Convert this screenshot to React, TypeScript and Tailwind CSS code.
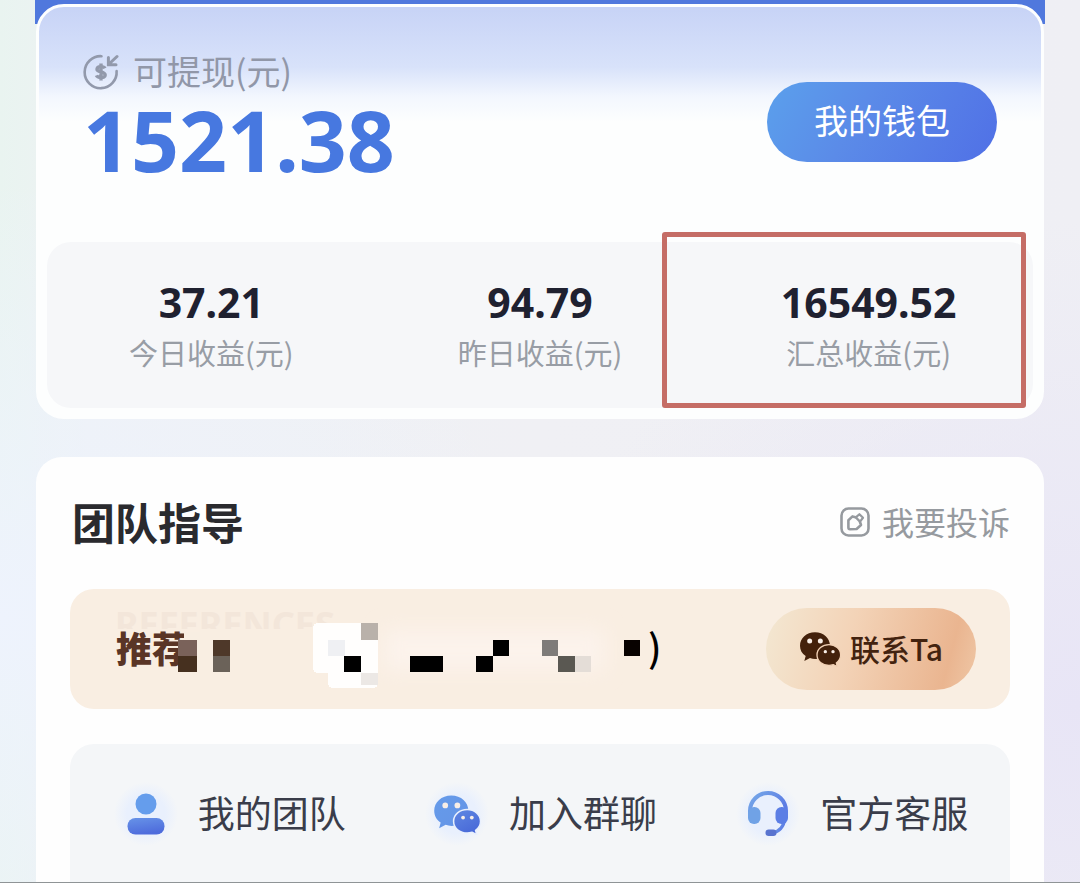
import React from "react";

const stats = [
  { value: "37.21", label: "今日收益(元)" },
  { value: "94.79", label: "昨日收益(元)" },
  { value: "16549.52", label: "汇总收益(元)", highlighted: true },
];

function WithdrawIcon() {
  return (
    <svg viewBox="0 0 36 36" className="size-9 shrink-0" fill="none" stroke="#9299ab" strokeWidth="2.6" aria-hidden="true">
      <path d="M18.5 2.2A16 16 0 1 0 33.6 17" strokeLinecap="round" />
      <path d="M34 2.5 25.5 10.5M25.4 3.4V10.8H33" strokeWidth="3" strokeLinecap="round" />
      <path d="M22 14.2C21 12.2 14.2 11.6 14 15.2C13.9 18.6 22.2 17 22.2 20.9C22.2 24.8 14.4 23.8 13.4 21.4M18 9.4V26.4" strokeWidth="3.4" />
    </svg>
  );
}

function ComplaintIcon() {
  return (
    <svg viewBox="0 0 30 30" className="size-[30px] shrink-0" fill="none" stroke="#969a9f" strokeWidth="2.6" aria-hidden="true">
      <rect x="1.5" y="1.5" width="27" height="27" rx="7" />
      <path d="M15.4 10.2L12.5 9.4L8.4 13.2V20.6Q8.4 22.2 10 22.2L16.6 22L21 18L20 15" strokeLinejoin="round" strokeLinecap="round" />
      <path d="M15.8 10.4L19.4 7.2L23 10.8L20 14.6Z" strokeWidth="2.2" strokeLinejoin="round" />
    </svg>
  );
}

function WechatIcon({ className, big, small, gap }: { className: string; big: string; small: string; gap: string }) {
  return (
    <svg viewBox="0 0 126 108" className={className} aria-hidden="true">
      <defs>
        <linearGradient id="bubble" x1="0" y1="0" x2="1" y2="1">
          <stop offset="0" stopColor="#659bea" />
          <stop offset="1" stopColor="#6594e6" />
        </linearGradient>
        <linearGradient id="bubbleSmall" x1="0" y1="0" x2="0.6" y2="1">
          <stop offset="0" stopColor="#6088e2" />
          <stop offset="1" stopColor="#4869d8" />
        </linearGradient>
      </defs>
      <path fill={big} d="M48 4C22 4 3 22 3 44C3 57 9 68 20 75L16 90L33 81C38 83 43 84 49 84C74 84 93 66 93 44C93 22 74 4 48 4Z" />
      <circle cx="32" cy="30" r="7.5" fill="#f8eee6" />
      <circle cx="64" cy="30" r="7.5" fill="#f8eee6" />
      <path fill={small} stroke={gap} strokeWidth="4" d="M90 41C70 41 54 54 54 72C54 90 70 103 90 103C95 103 99 102 103 101L115 107L112 96C120 90 125 82 125 72C125 54 109 41 90 41Z" />
      <circle cx="79" cy="62" r="5" fill="#f8eee6" />
      <circle cx="102" cy="62" r="5" fill="#f8eee6" />
    </svg>
  );
}

function MemberIcon() {
  return (
    <svg viewBox="0 0 38 42" className="h-[42px] w-[38px]" aria-hidden="true">
      <defs>
        <linearGradient id="member" x1="0" y1="0" x2="0.3" y2="1">
          <stop offset="0" stopColor="#6793e8" />
          <stop offset="1" stopColor="#4e6cdc" />
        </linearGradient>
      </defs>
      <circle cx="19" cy="11" r="10.5" fill="#659dec" />
      <rect x="0.5" y="25" width="37" height="16.5" rx="8" fill="url(#member)" />
    </svg>
  );
}

function HeadsetIcon() {
  return (
    <svg viewBox="0 0 42 46" className="h-[46px] w-[42px]" fill="none" aria-hidden="true">
      <defs>
        <linearGradient id="headset" x1="0" y1="0" x2="1" y2="0.5">
          <stop offset="0" stopColor="#76a9e8" />
          <stop offset="1" stopColor="#5c7ce4" />
        </linearGradient>
      </defs>
      <g stroke="url(#headset)" strokeLinecap="round">
        <path d="M3 24V20A18 18 0 0 1 39 20V24" strokeWidth="4" />
        <path d="M38 27C37 36 32 41 24 42.5" strokeWidth="3" />
      </g>
      <rect x="1" y="16" width="12.5" height="17" rx="6" fill="#70a2e6" />
      <rect x="28.5" y="16" width="12.5" height="17" rx="6" fill="#5b7ee5" />
      <rect x="18.5" y="38.5" width="11" height="6.5" rx="3.2" fill="#5873cf" />
    </svg>
  );
}

function Mosaic() {
  return (
    <svg viewBox="178 608 462 82" className="-ml-[10px] h-[82px] w-[462px] shrink-0" shapeRendering="crispEdges" aria-hidden="true">
      <defs>
        <filter id="haze" x="-20%" y="-60%" width="140%" height="220%">
          <feGaussianBlur stdDeviation="10" />
        </filter>
      </defs>
      <rect x="384" y="630" width="220" height="40" fill="#fcf3ec" filter="url(#haze)" />
      <path d="M184 632H200V640H184Z" fill="#f8eee2" />
      <path d="M178 640H197V656H178Z" fill="#7a625a" />
      <path d="M178 656H197V672H178Z" fill="#46301f" />
      <path d="M213 640H230V656H213Z" fill="#4e3829" />
      <path d="M213 656H230V672H213Z" fill="#6b6259" />
      <rect x="313" y="623" width="65" height="50" rx="5" fill="#fffefd" />
      <rect x="328" y="660" width="50" height="28" rx="5" fill="#fffefd" />
      <path d="M361 623H378V640H361Z" fill="#b9b1aa" />
      <path d="M328 640H345V656H328Z" fill="#eff0f3" />
      <path d="M344 656H361V672H344Z" fill="#000" />
      <path d="M361 673H378V685H361Z" fill="#ece8e5" />
      <path d="M410 656H443V672H410Z" fill="#000" />
      <path d="M476 656H493V672H476ZM493 640H509V656H493Z" fill="#000" />
      <path d="M542 640H558V656H542Z" fill="#7e7b79" />
      <path d="M558 656H575V672H558Z" fill="#5a5852" />
      <path d="M575 656H591V672H575Z" fill="#e4ddd7" />
      <path d="M624 640H640V656H624Z" fill="#080200" />
    </svg>
  );
}

function QuickLink({ icon, label }: { icon: React.ReactNode; label: string }) {
  return (
    <a href="#" className="flex items-center justify-center gap-5">
      <span className="grid size-16 shrink-0 place-items-center rounded-full bg-[radial-gradient(closest-side,#e9f0fd_60%,#f4f6f8)]">
        {icon}
      </span>
      <span className="pb-[5px] text-[37px] leading-[48px] whitespace-nowrap text-[#3a3d4a]">{label}</span>
    </a>
  );
}

export default function App() {
  return (
    <main className="min-h-screen border-b border-[#8f9496] bg-[radial-gradient(50%_55%_at_100%_80%,#e8e5f6_0%,#e8e5f600_100%),radial-gradient(50%_50%_at_0%_70%,#eef3fd_0%,#eef3fd00_100%),linear-gradient(90deg,#e9f4f0_0,#eef1f4_8%,#f0f0f4_50%,#efeff4_100%)] font-['Noto_Sans_CJK_SC',sans-serif]">
      <div className="bg-[linear-gradient(180deg,#5078dd_24px,transparent_24px)] bg-[length:calc(100%-70px)_100%] bg-center bg-no-repeat px-9 pt-1">
        <section className="rounded-[28px] border-[3px] border-[#fdfefe] bg-[linear-gradient(180deg,#c7d3f6_0,#d8e2fa_60px,#f3f7fe_90px,#fdfefe_115px)] pb-2">
          <div className="flex items-start justify-between px-[44px] pt-[45px] pb-[60px]">
            <div>
              <div className="flex h-10 items-center gap-[14px] text-[34px] leading-10 text-[#9197a8]">
                <WithdrawIcon />
                <span className="pb-[2px]">可提现(元)</span>
              </div>
              <p className="mt-[6px] font-['Noto_Sans',sans-serif] text-[84px] leading-[84px] font-bold text-[#4778e0]">1521.38</p>
            </div>
            <button className="mt-[30px] h-20 w-[230px] rounded-full bg-[linear-gradient(120deg,#5ba0ec_0%,#5b8be8_40%,#5070e6_100%)] pb-[5px] text-[34px] text-white">
              我的钱包
            </button>
          </div>
          <div className="mx-2 grid grid-cols-3 rounded-[24px] bg-[#f6f7f9] text-center">
            {stats.map((s) => (
              <div key={s.label} className="relative pt-9 pb-[38px]">
                <p className="font-['Noto_Sans',sans-serif] text-[41px] leading-[48px] font-bold text-[#1f2130]">{s.value}</p>
                <p className="mt-2 text-[29px] leading-9 text-[#989da5]">{s.label}</p>
                {s.highlighted && (
                  <div className="absolute -top-[10px] right-[7px] bottom-0 -left-[42px] rounded-[3px] border-[5px] border-[#c56d66]" />
                )}
              </div>
            ))}
          </div>
        </section>

        <section className="mt-[38px] rounded-t-[26px] bg-[#fefefe] px-[34px] pt-9">
          <div className="flex items-center justify-between pl-[2px]">
            <h2 className="text-[43px] leading-[56px] font-bold text-[#2a2a2e]">团队指导</h2>
            <a href="#" className="flex items-center gap-3 pt-[2px] text-[32px] leading-10 text-[#969a9f]">
              <ComplaintIcon />
              <span className="pb-[2px]">我要投诉</span>
            </a>
          </div>

          <div className="relative mt-10 flex h-[120px] items-center rounded-[24px] bg-[#f9eee2] pr-[34px] pl-[46px]">
            <div className="absolute top-[18px] left-[45px] h-[22px] overflow-hidden font-['Noto_Sans',sans-serif] text-[36px] leading-9 font-bold text-[#f3e6da]" aria-hidden="true">
              REFERENCES
            </div>
            <span className="relative pb-1 text-[36px] leading-[48px] font-black whitespace-nowrap text-[#5a3526]">推荐</span>
            <div className="relative flex items-center">
              <Mosaic />
              <span className="ml-2 pb-[6px] text-[38px] leading-[48px] font-medium text-black">)</span>
            </div>
            <button className="ml-auto flex h-[82px] w-[210px] shrink-0 items-center justify-center gap-[9px] rounded-full bg-[linear-gradient(105deg,#f3e5cf_5%,#f3d3b7_40%,#eab590_85%,#efc7a6_100%)] text-[30px] font-medium text-[#43230f]">
              <WechatIcon className="h-[36px] w-[42px]" big="#43210b" small="#43210b" gap="#f2d2b6" />
              <span className="pb-[2px]">联系Ta</span>
            </button>
          </div>

          <nav className="mt-[35px] grid grid-cols-3 rounded-t-[24px] bg-[#f4f6f8] pt-[38px] pr-[2px] pb-9 pl-1">
            <QuickLink icon={<MemberIcon />} label="我的团队" />
            <QuickLink
              icon={<WechatIcon className="h-[41px] w-[48px]" big="url(#bubble)" small="url(#bubbleSmall)" gap="#e9f0fd" />}
              label="加入群聊"
            />
            <QuickLink icon={<HeadsetIcon />} label="官方客服" />
          </nav>
        </section>
      </div>
    </main>
  );
}
